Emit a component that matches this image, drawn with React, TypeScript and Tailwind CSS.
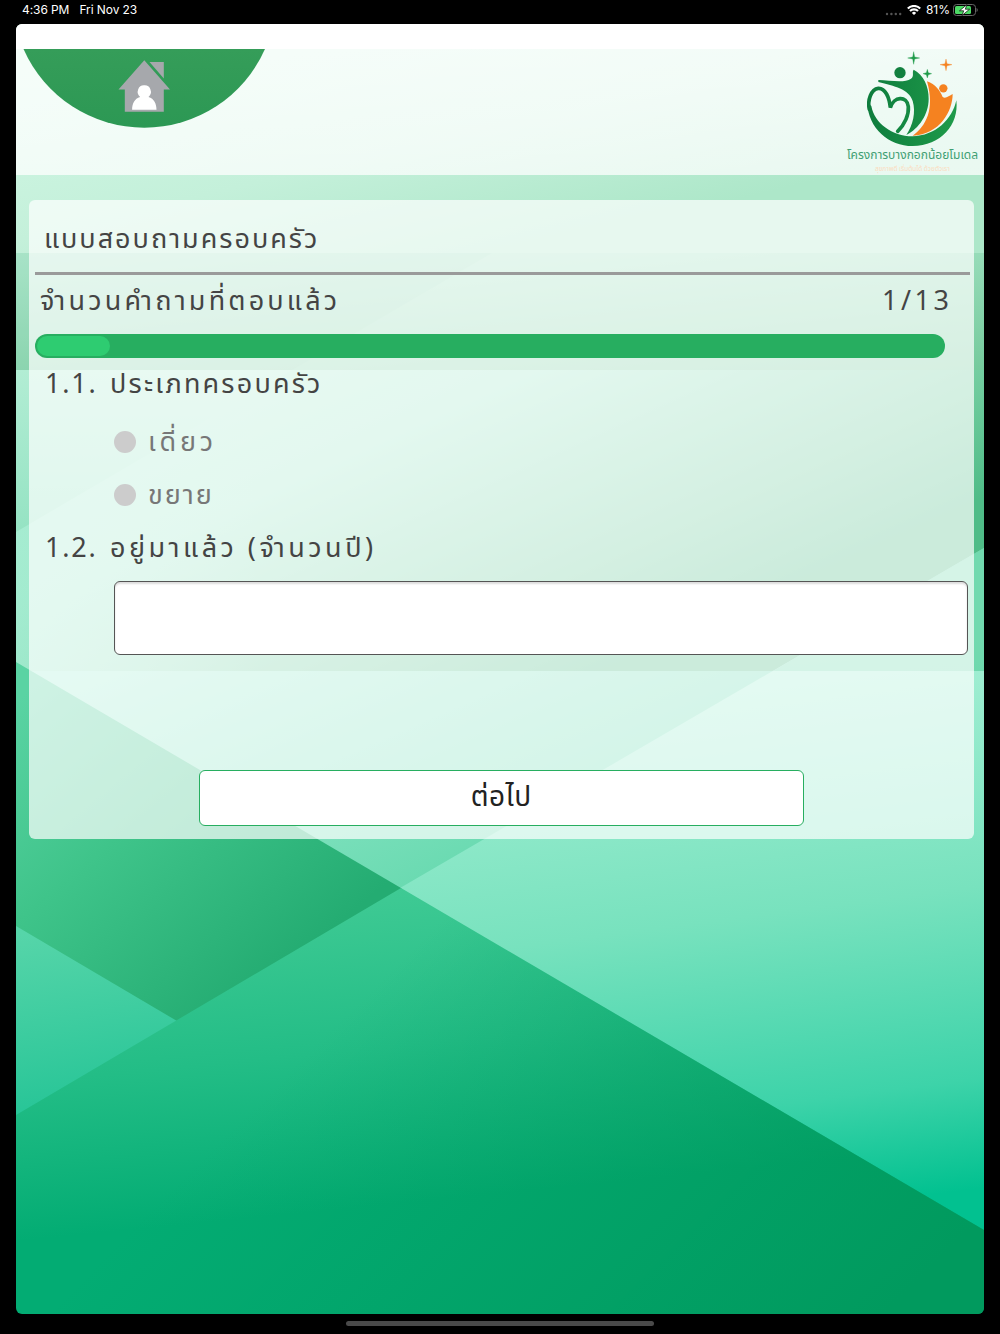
import React, { useState, FC } from "react";

const question = "text-[27px] leading-8 text-[#444]";

const options = [
  { label: "เดี่ยว", tracking: "tracking-[3.8px]" },
  { label: "ขยาย", tracking: "tracking-[2px]" },
];

const Background: FC = () => (
  <svg
    className="absolute left-0 top-0 h-full w-full"
    viewBox="16 24 968 1290"
    preserveAspectRatio="none"
    aria-hidden="true"
  >
    <defs>
      <linearGradient id="top" gradientUnits="userSpaceOnUse" x1="300" y1="40" x2="360" y2="290">
        <stop offset="0" stopColor="#cff6e3" />
        <stop offset="0.5" stopColor="#c4f0da" />
        <stop offset="1" stopColor="#ade7c9" />
      </linearGradient>
      <linearGradient id="upper" gradientUnits="userSpaceOnUse" x1="16" y1="253" x2="39" y2="472">
        <stop offset="0" stopColor="#b3ead0" />
        <stop offset="1" stopColor="#75ca9c" />
      </linearGradient>
      <linearGradient id="band" gradientUnits="userSpaceOnUse" x1="100" y1="350" x2="307" y2="805">
        <stop offset="0" stopColor="#b8efd8" />
        <stop offset="0.4" stopColor="#a0e7c9" />
        <stop offset="0.8" stopColor="#6fcb9d" />
        <stop offset="1" stopColor="#50bc88" />
      </linearGradient>
      <linearGradient id="wedge" gradientUnits="userSpaceOnUse" x1="16" y1="370" x2="16" y2="532">
        <stop offset="0" stopColor="#b2edd4" />
        <stop offset="1" stopColor="#95e3c3" />
      </linearGradient>
      <linearGradient id="edge" gradientUnits="userSpaceOnUse" x1="16" y1="600" x2="260" y2="600">
        <stop offset="0" stopColor="#a4edd2" stopOpacity="0.7" />
        <stop offset="1" stopColor="#a4edd2" stopOpacity="0" />
      </linearGradient>
      <linearGradient id="middle" gradientUnits="userSpaceOnUse" x1="250" y1="600" x2="380" y2="900">
        <stop offset="0" stopColor="#a6eed5" />
        <stop offset="1" stopColor="#6adab1" />
      </linearGradient>
      <linearGradient id="right" gradientUnits="userSpaceOnUse" x1="820" y1="660" x2="890" y2="1200">
        <stop offset="0" stopColor="#a4efd4" />
        <stop offset="0.45" stopColor="#78e2be" />
        <stop offset="0.8" stopColor="#3dd3a9" />
        <stop offset="1" stopColor="#02c190" />
      </linearGradient>
      <linearGradient id="left" gradientUnits="userSpaceOnUse" x1="30" y1="690" x2="270" y2="980">
        <stop offset="0" stopColor="#5ad3a3" />
        <stop offset="0.45" stopColor="#3fc48a" />
        <stop offset="1" stopColor="#24ac72" />
      </linearGradient>
      <linearGradient id="corner" gradientUnits="userSpaceOnUse" x1="40" y1="930" x2="70" y2="1110">
        <stop offset="0" stopColor="#56d5a9" />
        <stop offset="1" stopColor="#27c597" />
      </linearGradient>
      <linearGradient id="bottom" gradientUnits="userSpaceOnUse" x1="400" y1="888" x2="431" y2="1200">
        <stop offset="0" stopColor="#3fca94" />
        <stop offset="0.5" stopColor="#23bd86" />
        <stop offset="1" stopColor="#03ac73" />
      </linearGradient>
      <linearGradient id="shade" gradientUnits="userSpaceOnUse" x1="380" y1="980" x2="800" y2="1400">
        <stop offset="0" stopColor="#009457" stopOpacity="0" />
        <stop offset="1" stopColor="#009457" stopOpacity="0.75" />
      </linearGradient>
    </defs>
    <path d="M16 24H984V253H16Z" fill="url(#top)" />
    <path d="M16 253H984V371H16Z" fill="url(#upper)" />
    <path d="M16 253H492L292 370H16Z" fill="#5cb98c" fillOpacity="0.12" />
    <path d="M16 370H984V671H16Z" fill="url(#band)" />
    <path d="M16 532L260 389V671H16Z" fill="url(#edge)" />
    <path d="M16 370H292L16 532Z" fill="url(#wedge)" />
    <path d="M16 671H984V1120H16Z" fill="url(#middle)" />
    <path d="M984 548V1240L400 888Z" fill="url(#right)" />
    <path d="M984 548V671H773Z" fill="#3fc48a" fillOpacity="0.5" />
    <path d="M16 662L401 888L420 920L16 1150Z" fill="url(#left)" />
    <path d="M16 926L177 1021L190 1050L16 1150Z" fill="url(#corner)" />
    <path d="M16 1115L401 888L984 1230V1314H16Z" fill="url(#bottom)" />
    <path d="M16 1115L401 888L984 1230V1314H16Z" fill="url(#shade)" />
  </svg>
);

const StatusBar: FC = () => (
  <div className="flex h-6 items-center justify-between bg-black pb-1 pl-[22px] pr-[22px] font-[Inter,sans-serif] text-xs text-white">
    <div className="flex gap-[10px] tracking-[-0.08px]">
      <span>4:36 PM</span>
      <span>Fri Nov 23</span>
    </div>
    <div className="flex items-center gap-1">
      <svg className="mr-px mt-2 h-1 w-[17px]" viewBox="0 0 17 4" fill="#555">
        <circle cx="2" cy="2" r="1.2" />
        <circle cx="6.400" cy="2" r="1.2" />
        <circle cx="10.800" cy="2" r="1.2" />
        <circle cx="15.200" cy="2" r="1.2" />
      </svg>
      <svg className="mr-px h-[10px] w-[14px]" viewBox="0 0 14 10" fill="none" stroke="#fff" strokeWidth="2.1">
        <path d="M0.8 3.5a8.800 8.800 0 0 1 12.400 0" />
        <path d="M3 6.100a5.600 5.600 0 0 1 8 0" />
        <path d="M7 10L4.900 7.900a3 3 0 0 1 4.200 0Z" fill="#fff" stroke="none" />
      </svg>
      <span>81%</span>
      <svg className="-ml-px h-3 w-[25px]" viewBox="0 0 25 12">
        <rect x="0.5" y="0.5" width="22" height="11" rx="3" fill="none" stroke="#666" />
        <rect x="2" y="2" width="16" height="8" rx="1.5" fill="#4cd964" />
        <path d="M14 0.500L6.500 6.800h4.200L9 11.500L16.600 5.200h-4.300Z" fill="#fff" stroke="#000" strokeWidth="0.7" />
        <path d="M23.600 4v4c1.400-.6 1.400-3.400 0-4Z" fill="#777" />
      </svg>
    </div>
  </div>
);

const HomeButton: FC = () => (
  <button type="button" aria-label="หน้าแรก" className="ml-[7px] h-[79px] w-[242px]">
    <svg className="h-full w-full" viewBox="0 0 242 79">
      <defs>
        <linearGradient id="home" x1="0" y1="0" x2="0" y2="1">
          <stop offset="0" stopColor="#359d59" />
          <stop offset="1" stopColor="#2c9854" />
        </linearGradient>
      </defs>
      <path d="M0.5 0H242A132 132 0 0 1 0.5 0Z" fill="url(#home)" />
      <path d="M126.500 13H140.800V29.500Z" fill="#a6a8ac" />
      <path d="M121.300 11.300L147 40.500H140.800V62.700H101.800V40.500H95.500Z" fill="#a6a8ac" />
      <path d="M121.300 36.300a6.200 6.500 0 0 1 4.200 11.600c5.600 1.700 8 6.600 8 12.800h-24.400c0-6.200 2.400-11.100 8-12.800a6.200 6.500 0 0 1 4.200-11.600Z" fill="#fff" />
    </svg>
  </button>
);

const Logo: FC = () => (
  <div className="mr-[5px] flex w-[133px] flex-col items-center pt-px">
    <svg className="ml-px h-[98px] w-[98px]" viewBox="105 150 294 294">
      <defs>
        <linearGradient id="leaf" gradientUnits="userSpaceOnUse" x1="115" y1="0" x2="385" y2="0">
          <stop offset="0" stopColor="#0e7c3d" />
          <stop offset="1" stopColor="#1f9b4a" />
        </linearGradient>
      </defs>
      <path
        d="M148 240C185 241 226 250 246 236C257 228 248 216 254 209C284 225 299 258 299 297C299 343 270 386 232 405C252 375 261 336 251 303C239 266 197 259 148 246Z"
        fill="url(#leaf)"
      />
      <circle cx="213" cy="218" r="17" fill="#12803f" />
      <path
        d="M294 244C320 254 332 270 341 291C350 298 360 287 371 282C371 333 333 403 251 407C291 378 318 329 294 244Z"
        fill="#f58220"
      />
      <circle cx="343" cy="265" r="12.500" fill="#f58220" />
      <path
        d="M206 394C227 374 240 344 238 320C234 286 194 289 184 323C181 292 169 264 148 265C126 268 115 300 121 328"
        fill="none"
        stroke="url(#leaf)"
        strokeWidth="11"
        strokeLinecap="round"
      />
      <path
        d="M115 308C117 385 180 438 251 438C335 438 391 375 382 301C370 357 320 408 250 409C190 408 136 370 127 318Z"
        fill="url(#leaf)"
      />
      <path d="M254 155L257 171L272 174L257 177L254 193L251 177L236 174L251 171Z" fill="#1f9b4a" stroke="#1f9b4a" />
      <path d="M295 208L298 218L308 221L298 224L295 234L292 224L282 221L292 218Z" fill="#1f9b4a" stroke="#1f9b4a" />
      <path d="M351 177L354 191L369 194L354 197L351 212L348 197L333 194L348 191Z" fill="#f58220" stroke="#f58220" />
    </svg>
    <p className="whitespace-nowrap text-xs leading-[14px] text-[#3f9f73]">โครงการบางกอกน้อยโมเดล</p>
    <p className="mt-[3px] whitespace-nowrap text-[6.5px] leading-[8px] text-[#fbdcc0]">สุขภาพดี เริ่มต้นได้ ด้วยตัวเรา</p>
  </div>
);

const App: FC = () => {
  const [familyType, setFamilyType] = useState<string>("");
  const [years, setYears] = useState<string>("");

  return (
    <div className="flex h-[1334px] w-[1000px] flex-col bg-black font-['Noto_Sans_Thai','Open_Sans','Noto_Sans',sans-serif]">
      <StatusBar />
      <main className="relative mx-4 h-[1290px] overflow-hidden rounded-md">
        <Background />
        <div className="relative flex flex-col">
          <div className="h-[25px] bg-white"></div>
          <header className="flex h-[126px] items-start justify-between bg-linear-to-b from-white/80 to-white/74">
            <HomeButton />
            <Logo />
          </header>

          <form
            onSubmit={(e) => e.preventDefault()}
            className="ml-[13px] mr-[10.5px] mt-[25px] flex h-[639px] flex-col rounded-md bg-white/70"
          >
            <h1 className={`${question} ml-[15px] pt-[24px] tracking-[2px]`}>แบบสอบถามครอบครัว</h1>
            <hr className="ml-1.5 mr-1 mt-4 border-t-[3px] border-[#9a9a9a]" />
            <div className={`${question} ml-[11px] mr-[21px] mt-[11px] flex justify-between`}>
              <span className="tracking-[3.2px]">จำนวนคำถามที่ตอบแล้ว</span>
              <span className="tracking-[3.5px]">1/13</span>
            </div>

            {/* Progress */}
            <div className="ml-1.5 mr-[29px] mt-4 h-6 shrink-0 rounded-full bg-[#27ae60] p-0.5">
              <div className="h-5 w-[73px] rounded-full bg-[#2ecc71]"></div>
            </div>

            <p className={`${question} ml-4 mt-[11px] flex`}>
              <span className="w-[65px] tracking-[1.8px]">1.1.</span>
              <span className="tracking-[2.2px]">ประเภทครอบครัว</span>
            </p>
            <div className="ml-[85px] mt-[25px] flex flex-col gap-[21px]">
              {options.map((option) => (
                <label key={option.label} className={`${question} flex h-8 items-center gap-3`}>
                  <input
                    type="radio"
                    name="familyType"
                    checked={familyType === option.label}
                    onChange={() => setFamilyType(option.label)}
                    className="h-[22px] w-[22px] appearance-none rounded-full bg-[#ccc] checked:bg-[#27ae60]"
                  />
                  <span className={`pt-0.5 text-[#777] ${option.tracking}`}>{option.label}</span>
                </label>
              ))}
            </div>

            <p className={`${question} ml-4 mt-[22px] flex`}>
              <span className="w-[65px] tracking-[1.8px]">1.2.</span>
              <span className="tracking-[3.5px]">อยู่มาแล้ว (จำนวนปี)</span>
            </p>
            <input
              type="text"
              value={years}
              onChange={(e) => setYears(e.target.value)}
              className="ml-[85px] mr-1.5 mt-4 h-[74px] shrink-0 rounded-md border border-[#555] bg-white px-4 text-2xl shadow-[inset_0_2px_2px_#ddd] outline-none"
            />
            <button
              type="submit"
              className="mx-[170px] mt-[115px] h-[56px] shrink-0 rounded-md border border-[#27ae60] bg-white text-[28px] tracking-[0.5px] text-[#222]"
            >
              ต่อไป
            </button>
          </form>
        </div>
      </main>
      <div className="mx-auto mt-[7px] h-[5px] w-[308px] rounded-full bg-[#4a4a4a]"></div>
    </div>
  );
};

export default App;
